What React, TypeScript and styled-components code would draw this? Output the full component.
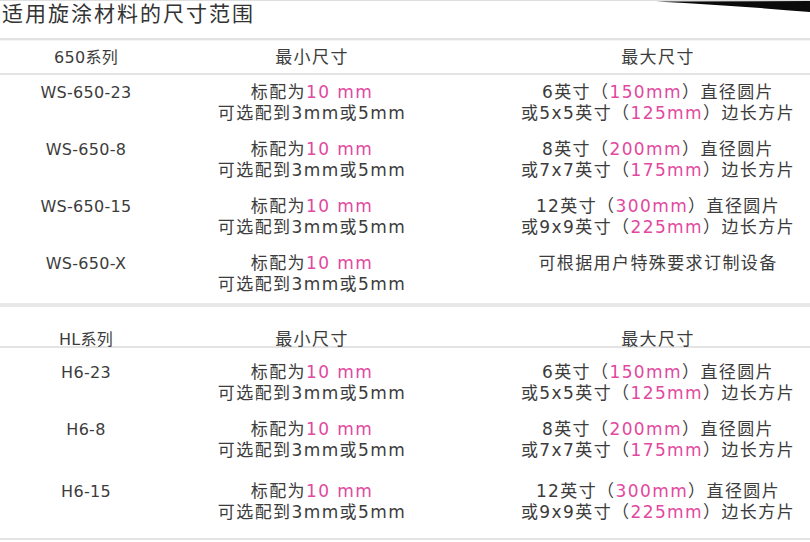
import styled, { createGlobalStyle } from 'styled-components'

const GlobalStyle = createGlobalStyle`
  html, body {
    margin: 0;
    padding: 0;
    background: #ffffff;
  }
  body {
    font-family: "DejaVu Sans", "Noto Sans CJK SC", sans-serif;
    color: #3c3c3c;
  }
`

interface SizeRow {
  model: string;
  max: [string, string, string][] | string;
  rowHeight: number;
  padTop: number;
}

interface Series {
  name: string;
  headHeight: number;
  headPad: number;
  rows: SizeRow[];
}

const sixInch: [string, string, string][] = [
  ['6英寸（', '150mm', '）直径圆片'],
  ['或5x5英寸（', '125mm', '）边长方片'],
]
const eightInch: [string, string, string][] = [
  ['8英寸（', '200mm', '）直径圆片'],
  ['或7x7英寸（', '175mm', '）边长方片'],
]
const twelveInch: [string, string, string][] = [
  ['12英寸（', '300mm', '）直径圆片'],
  ['或9x9英寸（', '225mm', '）边长方片'],
]

const seriesList: Series[] = [
  {
    name: '650系列',
    headHeight: 33,
    headPad: 7,
    rows: [
      { model: 'WS-650-23', max: sixInch, rowHeight: 57, padTop: 7 },
      { model: 'WS-650-8', max: eightInch, rowHeight: 57, padTop: 7 },
      { model: 'WS-650-15', max: twelveInch, rowHeight: 57, padTop: 7 },
      { model: 'WS-650-X', max: '可根据用户特殊要求订制设备', rowHeight: 57, padTop: 7 },
    ],
  },
  {
    name: 'HL系列',
    headHeight: 36,
    headPad: 19,
    rows: [
      { model: 'H6-23', max: sixInch, rowHeight: 57, padTop: 14 },
      { model: 'H6-8', max: eightInch, rowHeight: 57, padTop: 14 },
      { model: 'H6-15', max: twelveInch, rowHeight: 76, padTop: 19 },
    ],
  },
]

const Page = styled.div`
  position: relative;
  width: 810px;
  height: 542px;
  overflow: hidden;
  border-top: 1px solid #dedede;
  box-sizing: border-box;
`

const Swoosh = styled.svg`
  position: absolute;
  top: 0;
  right: 0;
`

const Title = styled.h2`
  margin: 0;
  height: 37px;
  padding-left: 2px;
  font-size: 21px;
  font-weight: normal;
  letter-spacing: 2px;
  line-height: 27px;
  color: #333333;
  border-bottom: 2px solid #e2e2e2;
  box-shadow: 0 1px 1px rgba(0, 0, 0, 0.04);
`

const Section = styled.section<{ $last?: boolean }>`
  border-bottom: ${p => (p.$last ? '2px solid #e4e4e4' : '4px solid #e8e8e8')};
  margin-bottom: 3px;
`

const Grid = styled.div<{ $height: number; $pad: number; $head?: boolean }>`
  display: grid;
  grid-template-columns: 170px 284px 1fr;
  height: ${p => p.$height}px;
  padding-top: ${p => p.$pad}px;
  box-sizing: border-box;
  font-size: 17px;
  letter-spacing: 1.4px;
  line-height: 21px;
  border-bottom: ${p => (p.$head ? '2px solid #e4e4e4' : 'none')};
`

const Cell = styled.div<{ $wide?: boolean }>`
  text-align: center;
  white-space: nowrap;
  padding-left: ${p => (p.$wide ? '52px' : '0')};
`

const Model = styled(Cell)`
  padding-left: 2px;
  font-size: 16px;
  letter-spacing: 0.3px;
`

const Pink = styled.span`
  color: #e2489f;
`

const Line = styled.div``

const App = () => {
  return (
    <Page>
      <GlobalStyle />
      <Swoosh width="154" height="12" viewBox="0 0 154 12">
        <path d="M0 0.5 L154 0 L154 11 Q85 5 0 0.5 Z" fill="#0a0a0a" />
      </Swoosh>
      <Title>适用旋涂材料的尺寸范围</Title>
      {seriesList.map((s, si) => (
        <Section key={s.name} $last={si === seriesList.length - 1}>
          <Grid $height={s.headHeight + 2} $pad={s.headPad} $head>
            <Model>{s.name}</Model>
            <Cell>最小尺寸</Cell>
            <Cell $wide>最大尺寸</Cell>
          </Grid>
          {s.rows.map(r => (
            <Grid key={r.model} $height={r.rowHeight} $pad={r.padTop}>
              <Model>{r.model}</Model>
              <Cell>
                <Line>标配为<Pink>10 mm</Pink></Line>
                <Line>可选配到3mm或5mm</Line>
              </Cell>
              <Cell $wide>
                {typeof r.max === 'string'
                  ? <Line>{r.max}</Line>
                  : r.max.map(([a, b, c]) => (
                    <Line key={a}>{a}<Pink>{b}</Pink>{c}</Line>
                  ))}
              </Cell>
            </Grid>
          ))}
        </Section>
      ))}
    </Page>
  )
}

export default App
